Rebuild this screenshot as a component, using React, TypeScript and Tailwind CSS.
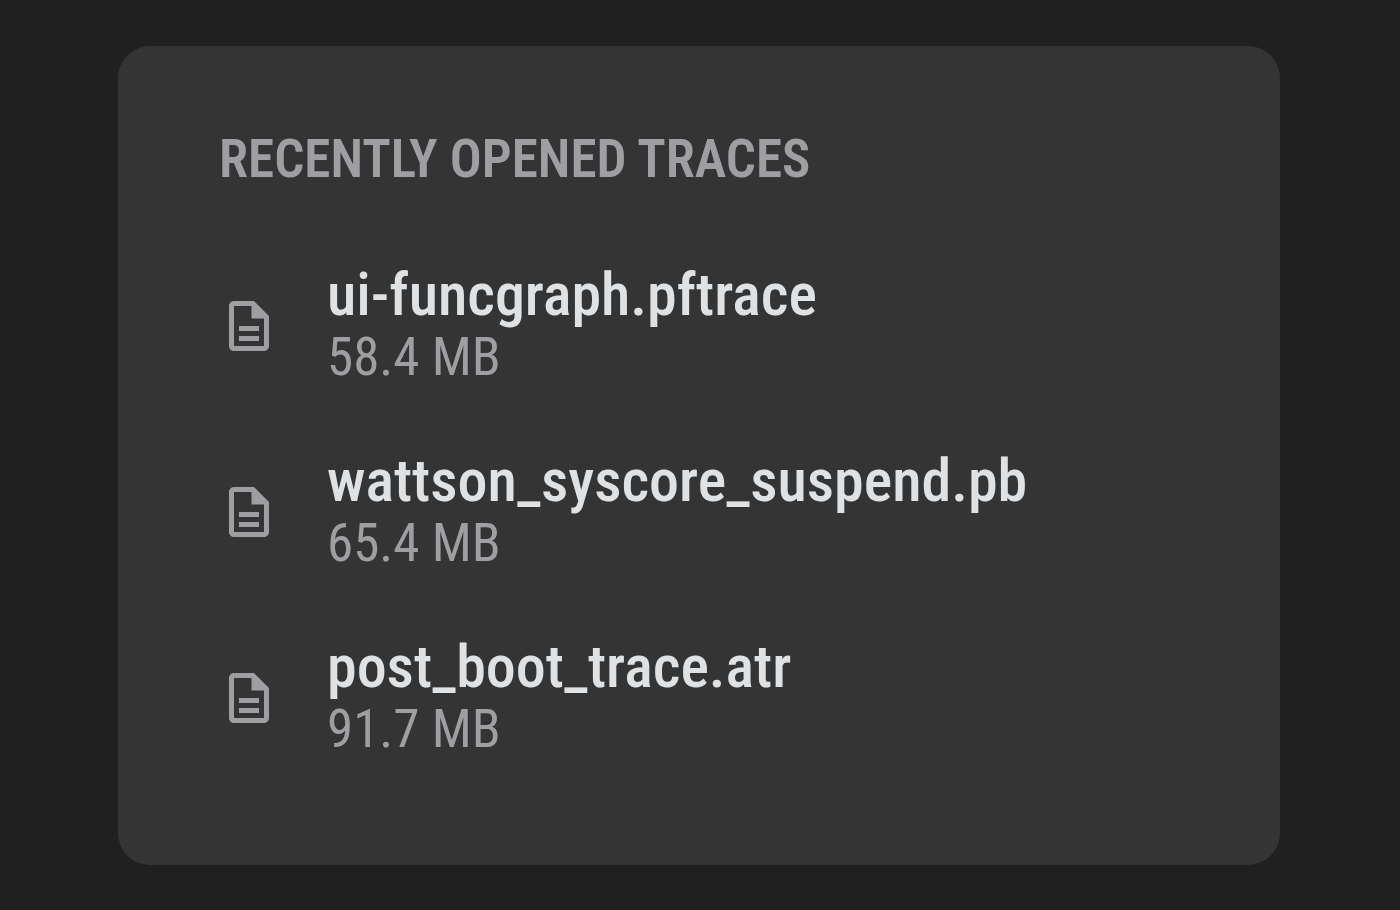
import { MdOutlineDescription } from 'react-icons/md';

interface Trace {
  name: string;
  size: string;
}

interface Props {
  trace: Trace;
}

const traces: Trace[] = [
  { name: 'ui-funcgraph.pftrace', size: '58.4 MB' },
  { name: 'wattson_syscore_suspend.pb', size: '65.4 MB' },
  { name: 'post_boot_trace.atr', size: '91.7 MB' },
];

const TraceItem = ({ trace }: Props) => {
  return (
    <li>
      <a href="#" className="flex items-center gap-12 pr-6">
        <MdOutlineDescription className="size-[60px] shrink-0 text-[#9f9fa3]" aria-hidden="true" />
        <span className="flex min-w-0 flex-col">
          <span className="text-[60px] leading-[62px] font-medium text-[#dfe2e5]">{trace.name}</span>
          <span className="text-[53px] leading-[62px] text-[#9f9fa3]">{trace.size}</span>
        </span>
      </a>
    </li>
  );
};

export default function App() {
  return (
    <main className="min-h-screen bg-[#202020] py-[46px] pr-[120px] pl-[118px] font-['Roboto_Condensed',Roboto,sans-serif]">
      <section className="rounded-[32px] bg-[#343434] px-[101px] pt-[82px] pb-[105px]">
        <h2 className="text-[53px] leading-[62px] font-semibold text-[#9f9fa3] uppercase">
          Recently opened traces
        </h2>
        <ul className="mt-[74px] flex flex-col gap-[62px]">
          {traces.map((trace) => (
            <TraceItem key={trace.name} trace={trace} />
          ))}
        </ul>
      </section>
    </main>
  );
}
